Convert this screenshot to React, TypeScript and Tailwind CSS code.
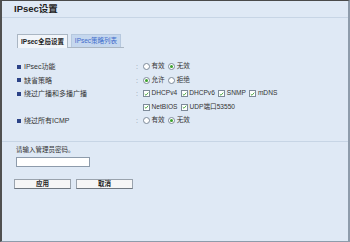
import React from 'react';

// ─── Small controls ─────────────────────────────────────────────────────────

const Radio: React.FC<{ checked?: boolean }> = ({ checked }) => (
  <span className="inline-flex items-center justify-center w-[7px] h-[7px] rounded-full border border-[#7d8a99] bg-white shrink-0">
    {checked && <span className="w-[3px] h-[3px] rounded-full bg-[#3aa02c]" />}
  </span>
);

const Check: React.FC = () => (
  <span className="inline-flex items-center justify-center w-[7px] h-[7px] border border-[#7d8a99] bg-white shrink-0">
    <svg viewBox="0 0 8 8" className="w-[6px] h-[6px]">
      <path d="M1.2 4.2 L3.2 6 L6.8 1.8" fill="none" stroke="#2f9a24" strokeWidth="1.3" />
    </svg>
  </span>
);

const Row: React.FC<{ label?: string; children: React.ReactNode }> = ({ label, children }) => (
  <div className="flex items-center h-[13.5px]">
    <div className="w-[119px] flex items-center gap-[2px]">
      {label && (
        <>
          <span className="w-[4px] h-[4px] bg-[#2c4387] shrink-0" />
          <span className="ml-[1px]">{label}</span>
        </>
      )}
    </div>
    <span className="w-[7px] text-[#8a95a3]">{label ? ':' : ''}</span>
    <div className="flex items-center text-[6.6px]">{children}</div>
  </div>
);

const Opt: React.FC<{ children: React.ReactNode; first?: boolean }> = ({ children, first }) => (
  <span className={`flex items-center gap-[1.5px] ${first ? '' : 'ml-[3.5px]'}`}>{children}</span>
);

// ─── Page ───────────────────────────────────────────────────────────────────

export default function App() {
  return (
    <div
      className="w-[350px] h-[242px] overflow-hidden bg-[#dfe9f5] border-t border-t-[#4a4a4a] border-l-2 border-l-[#505050] border-r-2 border-r-[#8e9cab] border-b border-b-[#8e9cab] text-[#333] flex flex-col"
      style={{ fontFamily: '"Liberation Sans", "Noto Sans CJK SC", sans-serif' }}
    >
      <div className="h-[16px] pl-[12px] pt-[1px] flex items-center text-[9.5px] font-bold text-[#222]">IPsec设置</div>
      <div className="h-px bg-[#c7d5e5]" />

      {/* Tabs */}
      <div className="mt-[16px] ml-[15px] w-[107px] flex items-end h-[14px] border-b border-b-[#aab6c3]">
        <div className="h-[14px] w-[51px] flex items-center justify-center bg-[#f1f5fa] border border-[#aab6c3] border-b-0 text-[6.5px] font-bold text-[#222] -mb-px">
          IPsec全局设置
        </div>
        <div className="ml-[3px] h-[13px] w-[50px] flex items-center justify-center bg-[#c5d7ee] border border-[#b6c8de] border-b-0 text-[6.5px] text-[#3e6ccc]">
          IPsec策略列表
        </div>
      </div>

      {/* Settings */}
      <div className="mt-[12px] ml-[15px] text-[7px] leading-none">
        <Row label="IPsec功能">
          <Opt first><Radio /><span>有效</span></Opt>
          <Opt><Radio checked /><span>无效</span></Opt>
        </Row>
        <Row label="缺省策略">
          <Opt first><Radio checked /><span>允许</span></Opt>
          <Opt><Radio /><span>拒绝</span></Opt>
        </Row>
        <Row label="绕过广播和多播广播">
          <Opt first><Check /><span>DHCPv4</span></Opt>
          <Opt><Check /><span>DHCPv6</span></Opt>
          <Opt><Check /><span>SNMP</span></Opt>
          <Opt><Check /><span>mDNS</span></Opt>
        </Row>
        <Row>
          <Opt first><Check /><span>NetBIOS</span></Opt>
          <Opt><Check /><span>UDP端口53550</span></Opt>
        </Row>
        <Row label="绕过所有ICMP">
          <Opt first><Radio /><span>有效</span></Opt>
          <Opt><Radio checked /><span>无效</span></Opt>
        </Row>
      </div>

      <div className="mt-[13px] h-px bg-[#c7d5e5]" />

      {/* Password */}
      <div className="ml-[14px] mt-[5px] text-[6.5px] leading-none">请输入管理员密码。</div>
      <input
        type="password"
        className="ml-[14px] mt-[4px] w-[74px] h-[10px] bg-white border border-[#8d9bab] outline-none"
      />

      <div className="ml-[12px] mt-[12px] flex gap-[5px]">
        <button className="w-[57px] h-[10px] flex items-center justify-center bg-[#f6f6f6] border border-[#9aa3ad] border-b-[#6f7780] text-[6.5px] font-bold text-[#222] leading-none">
          应用
        </button>
        <button className="w-[57px] h-[10px] flex items-center justify-center bg-[#f6f6f6] border border-[#9aa3ad] border-b-[#6f7780] text-[6.5px] font-bold text-[#222] leading-none">
          取消
        </button>
      </div>
    </div>
  );
}
